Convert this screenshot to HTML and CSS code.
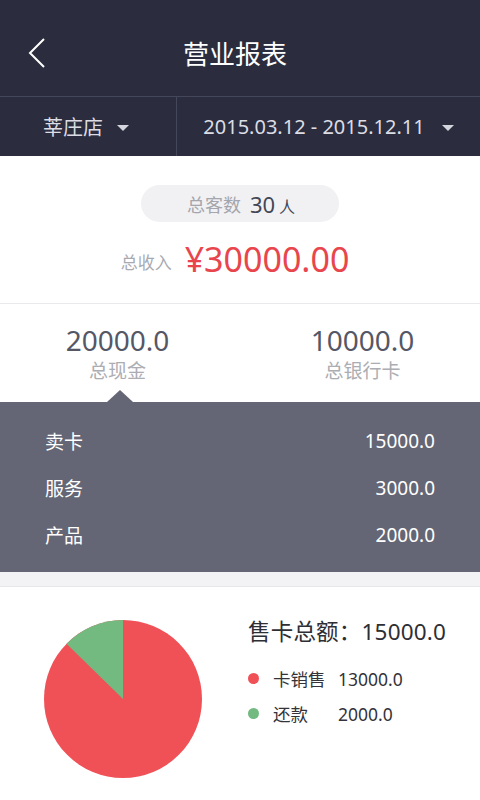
FILE: index.html
```html
<!DOCTYPE html>
<html lang="zh-CN">
<head>
<meta charset="utf-8">
<title>营业报表</title>
<link rel="stylesheet" href="styles.css">
</head>
<body>
<div class="app">
  <header class="topbar">
    <div class="back">
      <svg width="18" height="32" viewBox="0 0 18 32"><path d="M16 2 L2 16 L16 30" fill="none" stroke="#ffffff" stroke-width="2"/></svg>
    </div>
    <h1 class="title">营业报表</h1>
    <div></div>
  </header>
  <div class="filters">
    <div class="filter filter-store">
      <span>莘庄店</span><span class="caret"></span>
    </div>
    <div class="filter filter-date">
      <span>2015.03.12 - 2015.12.11</span><span class="caret"></span>
    </div>
  </div>
  <section class="summary">
    <div class="pill">
      <span class="pill-label">总客数</span>
      <span class="pill-num">30</span>
      <span class="pill-unit">人</span>
    </div>
    <div class="income">
      <span class="income-label">总收入</span>
      <span class="income-num">¥30000.00</span>
    </div>
  </section>
  <section class="stats">
    <div class="stat active">
      <div class="stat-num">20000.0</div>
      <div class="stat-label">总现金</div>
      <span class="pointer"></span>
    </div>
    <div class="stat">
      <div class="stat-num">10000.0</div>
      <div class="stat-label">总银行卡</div>
    </div>
  </section>
  <section class="detail">
    <div class="row"><span>卖卡</span><span>15000.0</span></div>
    <div class="row"><span>服务</span><span>3000.0</span></div>
    <div class="row"><span>产品</span><span>2000.0</span></div>
  </section>
  <div class="spacer"></div>
  <section class="chart">
    <svg class="pie" width="160" height="160" viewBox="0 0 160 160">
      <circle cx="80" cy="80" r="79" fill="#ef5157"/>
      <path d="M80 80 L80 1 A79 79 0 0 0 23.5 24.8 Z" fill="#72ba80"/>
    </svg>
    <div class="legend">
      <div class="legend-title">售卡总额：15000.0</div>
      <div class="legend-row first"><span class="dot red"></span><span class="lg-name">卡销售</span><span class="lg-val">13000.0</span></div>
      <div class="legend-row"><span class="dot green"></span><span class="lg-name">还款</span><span class="lg-val">2000.0</span></div>
    </div>
  </section>
</div>
</body>
</html>
```
FILE: styles.css
```css
* { box-sizing: border-box; }
html, body { margin: 0; padding: 0; background: #ffffff; }
body {
  font-family: "Noto Sans", "Noto Sans CJK SC", sans-serif;
  width: 480px;
  height: 800px;
  overflow: hidden;
}
.app { width: 480px; }

.topbar {
  height: 96px;
  background: #2b2d3e;
  display: grid;
  grid-template-columns: 80px 1fr 90px;
  align-items: center;
}
.back { padding-left: 28px; padding-top: 10px; display: flex; align-items: center; }
.title {
  margin: 0;
  text-align: center;
  color: #ffffff;
  font-size: 26px;
  font-weight: 400;
  padding-top: 10px;
}

.filters {
  height: 60px;
  background: #2b2d3e;
  border-top: 1px solid #44465a;
  display: flex;
}
.filter {
  display: flex;
  align-items: center;
  justify-content: center;
  color: #dcdde4;
  font-size: 20px;
}
.filter-store { width: 177px; border-right: 1px solid #44465a; gap: 14px; padding-right: 4px; }
.filter-date { flex: 1; gap: 17px; }
.caret {
  width: 0; height: 0;
  border-left: 6px solid transparent;
  border-right: 6px solid transparent;
  border-top: 6px solid #d5d6dd;
  margin-top: 3px;
}

.summary {
  height: 148px;
  padding-top: 29px;
  display: flex;
  flex-direction: column;
  align-items: center;
  border-bottom: 1px solid #e9e9ec;
}
.pill {
  width: 198px;
  height: 37px;
  border-radius: 19px;
  background: #f1f1f3;
  display: flex;
  align-items: center;
  justify-content: center;
  gap: 9px;
  padding-left: 2px;
}
.pill-label { color: #a4a5ad; font-size: 18px; }
.pill-num { color: #444655; font-size: 22px; }
.pill-unit { color: #444655; font-size: 16px; margin-left: -5px; padding-top: 4px; }
.income {
  margin-top: 14px;
  display: flex;
  align-items: center;
  gap: 13px;
  padding-right: 10px;
}
.income-label { color: #a9aab1; font-size: 17px; padding-top: 4px; }
.income-num { color: #e8464c; font-size: 34px; }

.stats {
  height: 98px;
  display: flex;
}
.stat {
  flex: 1;
  position: relative;
  display: flex;
  flex-direction: column;
  align-items: center;
  padding-top: 20px;
}
.stat:last-child { padding-left: 10px; }
.stat-num { color: #555766; font-size: 28px; line-height: 32px; }
.stat-label { color: #acadb3; font-size: 19px; line-height: 24px; margin-top: 3px; }
.pointer {
  position: absolute;
  left: 107px;
  bottom: 0;
  width: 0; height: 0;
  border-left: 13px solid transparent;
  border-right: 13px solid transparent;
  border-bottom: 12px solid #646675;
}

.detail {
  background: #646675;
  height: 170px;
  padding: 16px 45px 14px 45px;
  display: flex;
  flex-direction: column;
}
.row {
  height: 47px;
  display: flex;
  justify-content: space-between;
  align-items: center;
  color: #ffffff;
  font-size: 19px;
}

.spacer {
  height: 15px;
  background: #f3f3f5;
  border-bottom: 1px solid #e7e7ea;
}

.chart {
  height: 212px;
  display: flex;
  align-items: flex-start;
  padding-top: 32px;
  padding-left: 43px;
}
.pie { display: block; }
.legend { margin-left: 45px; margin-top: -2px; }
.legend-title { color: #2e2e35; font-size: 22.5px; line-height: 30px; letter-spacing: 0.2px; }
.legend-row {
  display: flex;
  align-items: center;
  height: 35px;
  color: #333339;
  font-size: 17.5px;
}
.legend-row.first { margin-top: 14px; }
.dot { width: 11px; height: 11px; border-radius: 50%; margin-left: 0; margin-right: 14px; }
.dot.red { background: #ef5157; }
.dot.green { background: #72ba80; }
.lg-name { width: 65px; }
```
